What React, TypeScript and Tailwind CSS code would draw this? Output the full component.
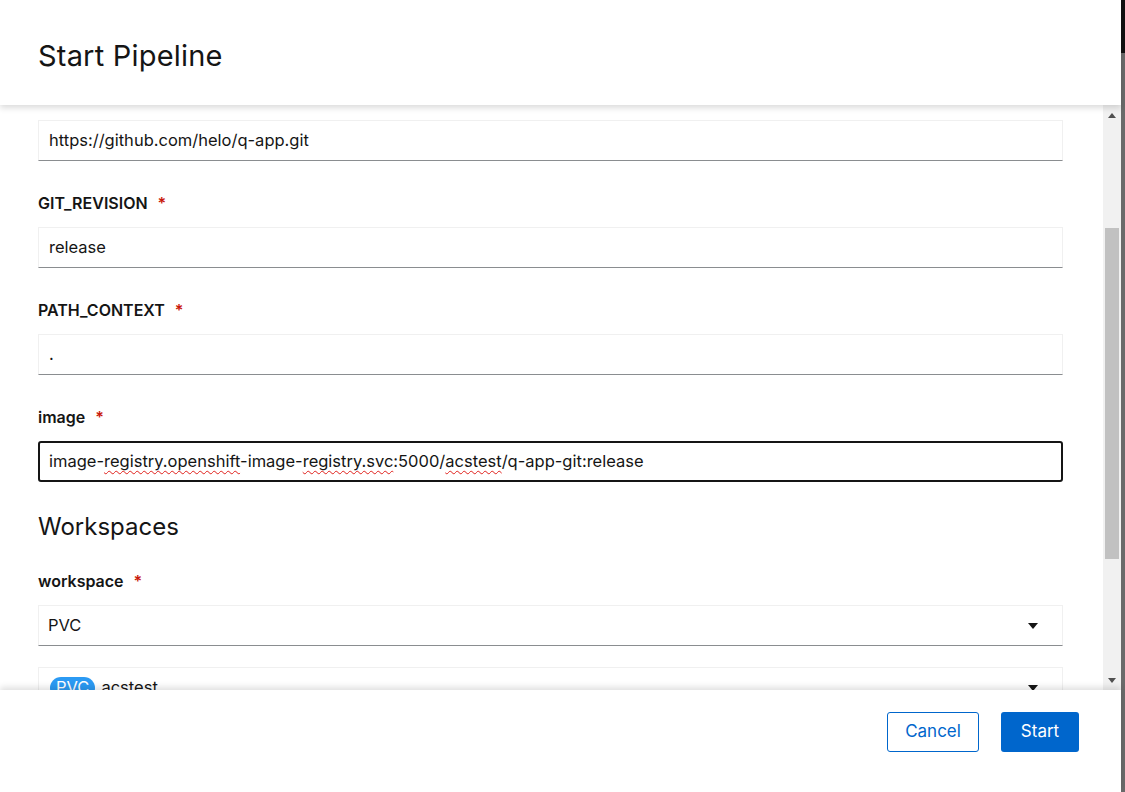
import React from 'react';

const font = { fontFamily: 'Inter, "Noto Sans", sans-serif' };

function Label({ text }: { text: string }) {
  return (
    <div className="flex h-[21px] items-center gap-[10px] text-[16px] font-semibold leading-[21px] text-[#151515]">
      <span>{text}</span>
      <span className="text-[#c9190b]">*</span>
    </div>
  );
}

function TextBox({ value }: { value: string }) {
  return (
    <div className="flex h-[41px] items-center border border-[#f0f0f0] border-b-[#8a8d90] px-[10px] text-[16.5px] text-[#151515]">
      {value}
    </div>
  );
}

function Caret() {
  return (
    <svg width="10" height="6" viewBox="0 0 10 6" className="shrink-0">
      <path d="M0 0 H10 L5 6 Z" fill="#151515" />
    </svg>
  );
}

function Spell({ children }: { children: React.ReactNode }) {
  return <span className="underline decoration-wavy decoration-[#e0201b] decoration-1 underline-offset-[3px]">{children}</span>;
}

function ScrollArrow({ up }: { up?: boolean }) {
  return (
    <div className="flex h-[17px] items-center justify-center">
      <svg width="8" height="5" viewBox="0 0 8 5">
        <path d={up ? 'M0 5 H8 L4 0 Z' : 'M0 0 H8 L4 5 Z'} fill="#505050" />
      </svg>
    </div>
  );
}

export default function App() {
  return (
    <div className="flex h-[792px] w-[1125px] overflow-hidden bg-white" style={font}>
      <div className="flex w-[1121px] flex-col">
        {/* Header */}
        <div className="relative z-10 flex h-[105px] shrink-0 items-center bg-white px-[38px] pt-[7px] shadow-[0_3px_6px_rgba(0,0,0,0.14)]">
          <h1 className="text-[29px] font-normal tracking-[0.2px] text-[#151515]">Start Pipeline</h1>
        </div>

        {/* Body */}
        <div className="flex min-h-0 flex-1">
          <div className="min-w-0 flex-1 overflow-hidden pl-[38px] pr-[40px] pt-[15px]">
            <TextBox value="https://github.com/helo/q-app.git" />

            <div className="mt-[32px]">
              <Label text="GIT_REVISION" />
              <div className="mt-[13px]">
                <TextBox value="release" />
              </div>
            </div>

            <div className="mt-[32px]">
              <Label text="PATH_CONTEXT" />
              <div className="mt-[13px]">
                <TextBox value="." />
              </div>
            </div>

            <div className="mt-[32px]">
              <Label text="image" />
              <div className="mt-[13px] flex h-[41px] items-center rounded-[3px] border-2 border-[#151515] px-[9px] text-[16.5px] text-[#151515]">
                <span>
                  image-<Spell>registry.openshift</Spell>-image-<Spell>registry.svc</Spell>:5000/<Spell>acstest</Spell>/q-app-git:release
                </span>
              </div>
            </div>

            <h2 className="mt-[29px] text-[24px] font-normal leading-[31px] text-[#151515]">Workspaces</h2>

            <div className="mt-[29px]">
              <Label text="workspace" />
              <div className="mt-[13px] flex h-[41px] items-center justify-between border border-[#f0f0f0] border-b-[#8a8d90] pl-[9px] pr-[24px] text-[16.5px] text-[#151515]">
                <span>PVC</span>
                <Caret />
              </div>
              <div className="mt-[21px] flex h-[41px] items-center justify-between border border-[#f0f0f0] border-b-[#8a8d90] pl-[11px] pr-[24px] text-[16.5px] text-[#151515]">
                <span className="flex items-center gap-[6px]">
                  <span className="flex h-[22px] items-center rounded-full bg-[#2b9af3] px-[6px] text-[16.5px] text-white">PVC</span>
                  <span>acstest</span>
                </span>
                <Caret />
              </div>
            </div>
          </div>

          {/* Scrollbar */}
          <div className="flex w-[18px] shrink-0 flex-col bg-[#f1f1f1]">
            <div className="pt-[2px]">
              <ScrollArrow up />
            </div>
            <div className="flex flex-1 flex-col px-[2px]">
              <div className="h-[104px]" />
              <div className="h-[331px] bg-[#c1c1c1]" />
            </div>
            <div className="pb-[1px]">
              <ScrollArrow />
            </div>
          </div>
        </div>

        {/* Footer */}
        <div className="relative z-10 flex h-[102px] shrink-0 items-start justify-end gap-[22px] bg-white pr-[42px] pt-[22px] shadow-[0_-3px_6px_rgba(0,0,0,0.12)]">
          <button className="h-[40px] w-[92px] rounded-[3px] border border-[#0066cc] bg-white text-[17px] text-[#0066cc]">Cancel</button>
          <button className="h-[40px] w-[78px] rounded-[3px] bg-[#0066cc] text-[17px] text-white">Start</button>
        </div>
      </div>

      {/* Backdrop edge */}
      <div className="flex w-[4px] flex-col">
        <div className="h-[53px] bg-[#111111]" />
        <div className="flex-1 bg-[#6a6a6a]" />
      </div>
    </div>
  );
}
